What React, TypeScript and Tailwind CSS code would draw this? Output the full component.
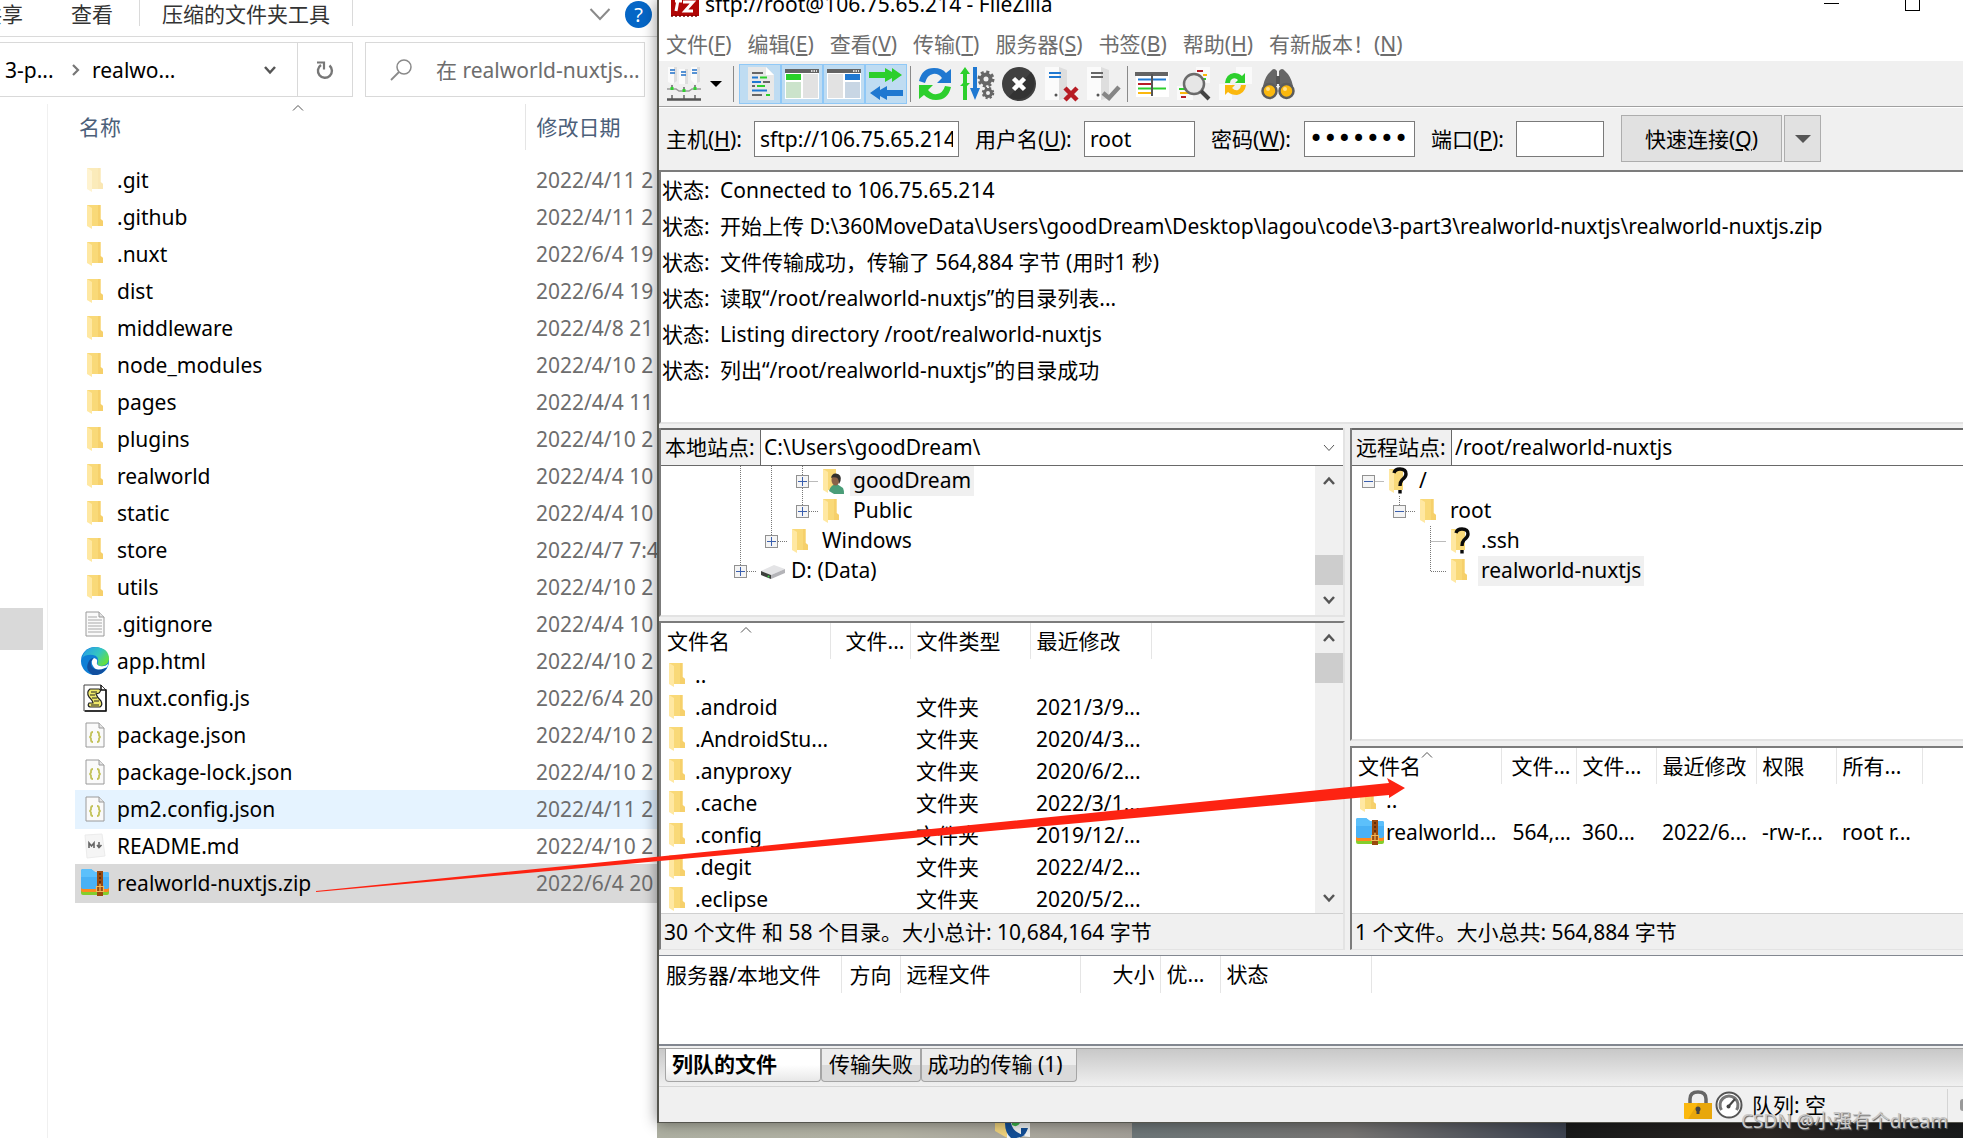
import React from 'react'

type FileRow = { name: string, date: string, icon: React.ReactNode, state?: 'hover' | 'selected' }

const Folder = ({ faded }: { faded?: boolean }) => (
  <svg className={faded ? 'opacity-50' : ''} width="18" height="24" viewBox="0 0 18 24">
    <path d="M1 0H14.500V14L17 16V21H6L1 20Z" fill="#f9d978" />
    <path d="M12 0H14.500V14L17 16V21H12Z" fill="#f6d06b" />
    <path d="M1 0L6 3V24L1 21Z" fill="#ffe8a2" />
  </svg>
)

const Page = ({ children }: { children?: React.ReactNode }) => (
  <svg width="20" height="26" viewBox="0 0 20 26">
    <path d="M1 1H14L19 6V25H1Z" fill="#fafafa" stroke="#9a9a9a" />
    <path d="M14 1V6H19" fill="#e3e3e3" stroke="#9a9a9a" />
    {children}
  </svg>
)

const TextFile = () => (
  <Page>
    <path d="M3 6H12M3 9H17M3 12H17M3 15H17M3 18H17M3 21H17" stroke="#a8a8a8" />
  </Page>
)

const JsonFile = () => (
  <Page>
    <path d="M8 10Q6 10 6 12V13.500L5 15L6 16.500V18Q6 20 8 20M12 10Q14 10 14 12V13.500L15 15L14 16.500V18Q14 20 12 20" fill="none" stroke="#c3c25a" strokeWidth="1.800" />
  </Page>
)

const ScriptFile = () => (
  <svg width="24" height="28" viewBox="0 0 24 28">
    <path d="M1 1H18L23 6V27H1Z" fill="#fff" stroke="#444" />
    <path d="M18 1V6H23V27H2" fill="none" stroke="#111" strokeWidth="1.500" />
    <path d="M7 5H16Q19 6 16 9L13 10Q14 13 18 17Q20 21 17 23H7Q4 22 6 19H10Q10 17 6 13Q3 8 7 5Z" fill="#f0e96a" stroke="#222" strokeWidth="1.200" />
    <path d="M8 8H14M7 11H12M9 14H14M11 17H16M8 21H16" stroke="#222" strokeWidth="1" />
  </svg>
)

const EdgeFile = () => (
  <svg width="28" height="28" viewBox="0 0 28 28">
    <defs>
      <linearGradient id="edgeTop" x1="0" y1="0" x2="1" y2="0.600">
        <stop offset="0.200" stopColor="#2aa7df" />
        <stop offset="0.600" stopColor="#35c6c0" />
        <stop offset="1" stopColor="#63e040" />
      </linearGradient>
    </defs>
    <circle cx="14" cy="14" r="14" fill="#0f7fd6" />
    <path d="M1 11Q4 0 15 0Q28 1 28 12Q27 19 20 19Q15 18 17 15Q18 9 12 8Q5 7 1 11Z" fill="url(#edgeTop)" />
    <path d="M13 11Q8 15 11 20Q15 25 24 21Q27 20 25 22Q20 29 12 28Q4 24 7 16Q9 11 13 11Z" fill="#114f9f" />
    <path d="M13 11Q17 12 16 15Q15 18 19 19Q24 20 27 17Q27 20 24 21Q15 25 12 19Q9 14 13 11Z" fill="#fff" />
  </svg>
)

const MarkdownFile = () => (
  <svg width="24" height="26" viewBox="0 0 24 26">
    <path d="M2 2L19 1L22 23L4 25Z" fill="#f5f5f5" stroke="#ececec" />
    <path d="M6 15V10L8.500 13L11 10V15M16 9V14M14 12L16 14.500L18.500 12" fill="none" stroke="#666" strokeWidth="1.600" />
  </svg>
)

const ZipFile = () => (
  <svg width="28" height="28" viewBox="0 0 28 28">
    <path d="M0 14H28V24Q28 26 26 26H2Q0 26 0 24Z" fill="#84ce2c" />
    <path d="M0 14H28V21Q28 23 26 23H2Q0 23 0 21Z" fill="#ff8a1e" />
    <path d="M0 2Q0 0 2 0H10L14 3H26Q28 3 28 5V18Q28 20 26 20H2Q0 20 0 18Z" fill="#49b1f5" />
    <path d="M0 2Q0 0 2 0H10L14 3H26Q28 3 28 5V8H0Z" fill="#5cc0fb" />
    <path d="M16 2H22V27H16Z" fill="#9a4a0e" />
    <path d="M19 4V16" stroke="#4d2508" strokeWidth="1.500" strokeDasharray="2 2" />
    <path d="M15.500 17.500H22.500V22.500H15.500ZM19 15V22" fill="none" stroke="#f2b95a" strokeWidth="1.200" />
  </svg>
)

const Disk = () => (
  <svg width="26" height="18" viewBox="0 0 26 18">
    <path d="M1 9L14 3L25 7L11 13Z" fill="#e4e4e6" />
    <path d="M1 9L11 13V17L1 13Z" fill="#3d403d" />
    <path d="M11 13L25 7V11L11 17Z" fill="#b4b4b8" />
    <circle cx="8.500" cy="14.500" r="1" fill="#3ed04a" />
  </svg>
)

const UserFolder = () => (
  <svg width="24" height="25" viewBox="0 0 24 25">
    <path d="M1 0H14V21H6L1 20Z" fill="#f9d978" />
    <path d="M1 0L6 3V24L1 21Z" fill="#ffe8a2" />
    <path d="M7 22Q9 15 15 15L21 19Q22 21 22 25H12Z" fill="#4a9d78" />
    <ellipse cx="13.500" cy="11" rx="4" ry="5.500" fill="#8a6248" />
    <path d="M9 9Q10 4 14 4.500Q20 5 18.500 12L17 15Q17 9 14 8.500Q10 8 9 9Z" fill="#33312f" />
  </svg>
)

const UnknownFolder = () => (
  <svg width="22" height="28" viewBox="0 0 22 28">
    <path d="M1 2H15V23H6L1 22Z" fill="#f9d978" />
    <path d="M1 2L6 5V26L1 23Z" fill="#ffe8a2" />
    <path d="M6 6Q7 2 12 2Q18 2 18 7Q18 10 14 13Q12 15 12 19M12 23V26.500" fill="none" stroke="#0a0a0a" strokeWidth="3.400" />
  </svg>
)

const Caret = ({ dir, className }: { dir: 'up' | 'down', className?: string }) => (
  <svg className={className} width="14" height="10" viewBox="0 0 14 10">
    <path d={dir === 'up' ? 'M2 8L7 2.500L12 8' : 'M2 2L7 7.500L12 2'} fill="none" stroke="#555" strokeWidth="2.500" />
  </svg>
)

const SortMark = () => (
  <svg className="absolute top-0 h-[8px] w-[12px]" viewBox="0 0 12 8">
    <path d="M1 6.500L6 1.500L11 6.500" fill="none" stroke="#555" />
  </svg>
)

const files: FileRow[] = [
  { name: '.git', date: '2022/4/11 2', icon: <Folder faded /> },
  { name: '.github', date: '2022/4/11 2', icon: <Folder /> },
  { name: '.nuxt', date: '2022/6/4 19', icon: <Folder /> },
  { name: 'dist', date: '2022/6/4 19', icon: <Folder /> },
  { name: 'middleware', date: '2022/4/8 21', icon: <Folder /> },
  { name: 'node_modules', date: '2022/4/10 2', icon: <Folder /> },
  { name: 'pages', date: '2022/4/4 11', icon: <Folder /> },
  { name: 'plugins', date: '2022/4/10 2', icon: <Folder /> },
  { name: 'realworld', date: '2022/4/4 10', icon: <Folder /> },
  { name: 'static', date: '2022/4/4 10', icon: <Folder /> },
  { name: 'store', date: '2022/4/7 7:4', icon: <Folder /> },
  { name: 'utils', date: '2022/4/10 2', icon: <Folder /> },
  { name: '.gitignore', date: '2022/4/4 10', icon: <TextFile /> },
  { name: 'app.html', date: '2022/4/10 2', icon: <EdgeFile /> },
  { name: 'nuxt.config.js', date: '2022/6/4 20', icon: <ScriptFile /> },
  { name: 'package.json', date: '2022/4/10 2', icon: <JsonFile /> },
  { name: 'package-lock.json', date: '2022/4/10 2', icon: <JsonFile /> },
  { name: 'pm2.config.json', date: '2022/4/11 2', icon: <JsonFile />, state: 'hover' },
  { name: 'README.md', date: '2022/4/10 2', icon: <MarkdownFile /> },
  { name: 'realworld-nuxtjs.zip', date: '2022/6/4 20', icon: <ZipFile />, state: 'selected' },
]

const rowState = {
  none: '',
  hover: 'bg-[#e5f3ff] outline outline-[#e5f3ff]',
  selected: 'bg-[#d9d9d9] outline outline-[#d9d9d9]',
}

const Explorer = () => (
  <section className="flex w-[657px] shrink-0 flex-col overflow-hidden bg-white">
    <nav className="flex h-[37px] items-start border-b border-[#dadada] text-[#333]">
      <button className="-ml-[19px] h-[28px] w-[42px]">共享</button>
      <button className="ml-12 h-[28px]">查看</button>
      <span className="ml-[26px] h-[26px] w-px bg-[#dadada]" />
      <button className="ml-[22px] h-[28px]">压缩的文件夹工具</button>
      <span className="ml-[22px] h-[26px] w-px bg-[#dadada]" />
      <button className="ml-auto h-[28px]" aria-label="展开功能区">
        <svg width="22" height="14" viewBox="0 0 22 14"><path d="M1.500 2L11 12L20.500 2" fill="none" stroke="#8a8a8a" strokeWidth="2" /></svg>
      </button>
      <button className="mr-[5px] ml-[14px] mt-px size-[27px] rounded-full bg-[#0566c6] text-[20px] leading-[27px] text-white">?</button>
    </nav>

    <div className="flex h-[67px] gap-3 pt-[5px] pr-3">
      <div className="flex h-[55px] w-[353px] items-center border border-l-0 border-[#d9d9d9]">
        <span className="w-[72px] pl-[5px]">3-p...</span>
        <svg width="8" height="12" viewBox="0 0 8 12"><path d="M1 1L6 6L1 11" fill="none" stroke="#777" strokeWidth="2.200" /></svg>
        <span className="pl-3">realwo...</span>
        <Caret dir="down" className="mr-5 ml-auto" />
        <button className="flex h-full w-[55px] items-center justify-center border-l border-[#d9d9d9]" aria-label="刷新">
          <svg width="18" height="20" viewBox="0 0 18 20">
            <path d="M13.500 5.500A7 7 0 1 1 5 5" fill="none" stroke="#777" strokeWidth="2.400" />
            <path d="M1 2.500H8V9.500" fill="none" stroke="#777" strokeWidth="2.200" />
          </svg>
        </button>
      </div>
      <label className="flex h-[55px] flex-1 items-center border border-[#d9d9d9] pl-6">
        <svg className="shrink-0" width="22" height="22" viewBox="0 0 22 22">
          <circle cx="14" cy="8" r="7" fill="none" stroke="#8a8a8a" strokeWidth="1.500" />
          <path d="M9 13L1 21" stroke="#8a8a8a" strokeWidth="1.800" />
        </svg>
        <input className="ml-6 w-full min-w-0 text-[#6d6d6d] outline-none placeholder:text-[#6d6d6d]" aria-label="搜索" placeholder="在 realworld-nuxtjs..." />
      </label>
    </div>

    <div className="flex flex-1">
      <aside className="w-[48px] border-r border-[#f0f0f0] pt-[504px]">
        <div className="h-[42px] w-[43px] bg-[#d9d9d9]" />
      </aside>
      <div className="min-w-0 flex-1 pl-[28px]">
        <table className="w-full table-fixed border-collapse">
          <colgroup>
            <col className="w-[449px]" />
            <col />
          </colgroup>
          <thead className="text-[#4c607a]">
            <tr className="h-[46px]">
              <th className="relative border-r border-[#e5e5e5] pl-[3px] text-left font-normal">
                名称
                <span className="absolute top-0 left-[216px]"><SortMark /></span>
              </th>
              <th className="pl-[11px] text-left font-normal whitespace-nowrap">修改日期</th>
            </tr>
          </thead>
          <tbody>
            <tr className="h-3"><td colSpan={2} /></tr>
            {files.map((file) => (
              <tr key={file.name} className={rowState[file.state ?? 'none']}>
                <td className="p-0">
                  <div className="flex h-[37px] items-center pb-[2px]">
                    <span className="flex w-[41px] justify-center pr-[3px]">{file.icon}</span>
                    <span>{file.name}</span>
                  </div>
                </td>
                <td className="pt-0 pr-0 pb-[2px] pl-[11px] whitespace-nowrap text-[#6d6d6d]">{file.date}</td>
              </tr>
            ))}
          </tbody>
        </table>
      </div>
    </div>
  </section>
)

const menus = [
  ['文件', 'F'], ['编辑', 'E'], ['查看', 'V'], ['传输', 'T'],
  ['服务器', 'S'], ['书签', 'B'], ['帮助', 'H'], ['有新版本！', 'N'],
]

const Key = ({ k }: { k: string }) => <>(<span className="underline underline-offset-2">{k}</span>)</>

const Tool = ({ label, active, children }: { label: string, active?: boolean, children: React.ReactNode }) => (
  <button
    aria-label={label}
    className={active
      ? 'flex h-[40px] w-[42px] items-center justify-center border border-[#90c8f6] bg-[#bfdcf2]'
      : 'flex h-[40px] w-[42px] items-center justify-center'}
  >
    <svg width="36" height="36" viewBox="0 0 36 36">{children}</svg>
  </button>
)

const Toolbar = () => (
  <div className="flex h-[46px] items-center border-b border-[#a0a0a0] pl-[4px]">
    <Tool label="站点管理器">
      <path d="M2 1H11V14L6.500 18L2 16ZM13 3H22V18H13ZM25 1H34V16L29 18L25 14Z" fill="#fbfbfb" />
      <path d="M8 1H11V15L8 17ZM19 3H22V18H19ZM31 1H34V16L31 17Z" fill="#dedede" />
      <path d="M4 4H9M4 7H9M15 6H20M15 9H20M26 4H31M26 7H31" stroke="#2070c8" strokeWidth="1.500" />
      <path d="M6 19V24M18 21V26M29 19V24M6 29V33M18 29V33M29 29V33" stroke="#888" strokeWidth="2" />
      <path d="M1 23H10L13 25H23L26 23H35" fill="none" stroke="#999" strokeWidth="1.500" />
      <path d="M1 33.500H35" fill="none" stroke="#555" strokeWidth="2.500" />
      <path d="M6 21V24M18 23V26M29 21V24" stroke="#30d030" strokeWidth="3" />
    </Tool>
    <button className="w-6 pl-[5px]" aria-label="站点列表">
      <svg width="12" height="8" viewBox="0 0 12 8"><path d="M0 1H12L6 7Z" fill="#000" /></svg>
    </button>
    <span className="mr-[5px] ml-[4px] h-9 w-px bg-[#8a8a8a]" />
    <Tool label="消息日志" active>
      <path d="M6 1H24L32 9V34H6Z" fill="#e8e8e8" />
      <path d="M24 1V9H32Z" fill="#fff" />
      <path d="M10 7H21M21 16H28M10 20H13M10 29H20" stroke="#666" strokeWidth="2.200" />
      <path d="M10 11.500H16M10 16H19M10 24.500H25" stroke="#1f78d1" strokeWidth="2.200" />
      <path d="M18 11.500H25M15 20H23M24 29H28" stroke="#2ccf2c" strokeWidth="2.200" />
    </Tool>
    <Tool label="本地目录树" active>
      <path d="M1 3H35V33H1Z" fill="#fff" />
      <path d="M1 3H35V7H1Z" fill="#636363" />
      <path d="M27 5H33" stroke="#fff" strokeWidth="1.500" strokeDasharray="1.500 1" />
      <path d="M2 8H17V14H2Z" fill="#28d028" />
      <path d="M2 16H17V32H2Z" fill="#cbe3cb" />
      <path d="M19 8H34V32H19Z" fill="#e2e2e2" />
    </Tool>
    <Tool label="远程目录树" active>
      <path d="M1 3H35V33H1Z" fill="#fff" />
      <path d="M1 3H35V7H1Z" fill="#636363" />
      <path d="M27 5H33" stroke="#fff" strokeWidth="1.500" strokeDasharray="1.500 1" />
      <path d="M2 8H17V32H2Z" fill="#e2e2e2" />
      <path d="M19 8H34V14H19Z" fill="#1f78d1" />
      <path d="M19 16H34V32H19Z" fill="#c8d6e4" />
    </Tool>
    <Tool label="传输队列" active>
      <path d="M1 6H17V2L24 6V2L34 9L24 16V12L17 16V12H1Z" fill="#2ccf2c" />
      <path d="M35 24H19V20L12 24V20L2 27L12 34V30L19 34V30H35Z" fill="#1f78d1" />
    </Tool>
    <span className="mx-[3px] h-9 w-px bg-[#8a8a8a]" />
    <Tool label="刷新">
      <path d="M2 15Q5 2 17 2Q25 2 29 7L34 3V17H20L25 12Q21 7 16 8Q10 9 8 17Z" fill="#1f78d1" />
      <path d="M34 21Q31 34 19 34Q12 34 7 29L2 33V19H16L11 24Q15 29 20 28Q26 27 28 20Z" fill="#2ccf2c" />
    </Tool>
    <Tool label="处理队列">
      <path d="M1 8L6 1L11 8H8V17H11L8 20V34H4V20H1L4 17V8Z" fill="#2ccf2c" />
      <path d="M14 1H18V22H21L16 34L11 22H14Z" fill="#1f78d1" />
      <circle cx="27" cy="13" r="4.500" fill="none" stroke="#666" strokeWidth="4" />
      <circle cx="27" cy="13" r="7" fill="none" stroke="#666" strokeWidth="3" strokeDasharray="3 2.500" />
      <circle cx="29" cy="27" r="3.500" fill="none" stroke="#666" strokeWidth="3" />
      <circle cx="29" cy="27" r="5" fill="none" stroke="#666" strokeWidth="2.500" strokeDasharray="2 2" />
    </Tool>
    <Tool label="取消">
      <circle cx="18" cy="18" r="17" fill="#404040" />
      <path d="M30 6A17 17 0 0 1 8 31Z" fill="#333" />
      <path d="M12.500 12.500L23.500 23.500M23.500 12.500L12.500 23.500" stroke="#fff" strokeWidth="4.500" />
    </Tool>
    <Tool label="断开连接">
      <path d="M2 1H16V34H2Z" fill="#fbfbfb" />
      <path d="M16 1L24 4V32L16 34Z" fill="#dedede" />
      <path d="M6 7H18M6 11H18" stroke="#1f78d1" strokeWidth="2" />
      <circle cx="13" cy="29" r="1.500" fill="#555" />
      <path d="M22 22L34 34M34 22L22 34" stroke="#b71c24" strokeWidth="4.500" />
    </Tool>
    <Tool label="重新连接">
      <path d="M2 1H16V34H2Z" fill="#fbfbfb" />
      <path d="M16 1L24 4V32L16 34Z" fill="#dedede" />
      <path d="M6 7H18M6 11H18" stroke="#666" strokeWidth="2" />
      <circle cx="13" cy="29" r="1.500" fill="#555" />
      <path d="M18 27L24 32L34 21" fill="none" stroke="#858585" strokeWidth="4.500" />
    </Tool>
    <span className="mx-[3px] h-9 w-px bg-[#8a8a8a]" />
    <Tool label="目录列表过滤">
      <path d="M2 6H35V31H2Z" fill="#fff" />
      <path d="M1 6H34V10H1Z" fill="#636363" />
      <path d="M4 13.500H32" stroke="#1f78d1" strokeWidth="2" />
      <path d="M4 18H17" stroke="#b71c24" strokeWidth="2" />
      <path d="M4 22.500H32" stroke="#2ccf2c" strokeWidth="2" />
      <path d="M4 27H17" stroke="#fbb80e" strokeWidth="2" />
      <path d="M18 8V30" stroke="#555" strokeWidth="2" />
    </Tool>
    <Tool label="目录对比">
      <path d="M20 1H34V17H20ZM1 20H17V34H1Z" fill="#fafafa" />
      <path d="M21 5H27M5 31H10" stroke="#b71c24" strokeWidth="2" />
      <path d="M27 9H31M4 27H14" stroke="#fbb80e" strokeWidth="2" />
      <path d="M3 23H12M27 13H30" stroke="#2ccf2c" strokeWidth="2" />
      <circle cx="18" cy="18" r="10" fill="#e6e6e6" stroke="#6b6b6b" strokeWidth="2.500" />
      <path d="M25 25L33 33" stroke="#444" strokeWidth="4" />
    </Tool>
    <Tool label="同步浏览">
      <path d="M18 1H34V18H18ZM1 18H14V34H1Z" fill="#fafafa" />
      <path d="M7 17Q8 8 16 7Q21 7 24 10L27 7V17H17L20 14Q17 11 14 13Q12 14 12 17Z" fill="#2ccf2c" />
      <path d="M28 19Q27 27 19 29Q13 29 10 26L7 29V19H17L14 22Q17 25 20 24Q23 22 23 19Z" fill="#fbb80e" />
    </Tool>
    <Tool label="搜索文件">
      <path d="M11 5Q14 1 17 5V20H3Q5 10 11 5ZM25 5Q22 1 19 5V20H33Q31 10 25 5Z" fill="#666" />
      <path d="M16 10H20V18H16Z" fill="#555" />
      <circle cx="9.500" cy="25" r="7" fill="#fbb80e" stroke="#5c5c5c" strokeWidth="2.500" />
      <circle cx="26.500" cy="25" r="7" fill="#fbb80e" stroke="#5c5c5c" strokeWidth="2.500" />
      <circle cx="8" cy="23" r="2" fill="#ffe08a" />
      <circle cx="25" cy="23" r="2" fill="#ffe08a" />
    </Tool>
  </div>
)

const field = 'h-[36px] border border-[#7a7a7a] bg-white outline-none'

const QuickConnect = () => (
  <form className="flex h-[63px] items-center border-t border-white pb-px pl-[7px]" onSubmit={(e) => e.preventDefault()}>
    <label className="w-[88px]" htmlFor="host">主机<Key k="H" />:</label>
    <input id="host" className={`${field} w-[205px] px-[5px]`} defaultValue="sftp://106.75.65.214" />
    <label className="ml-4 w-[109px]" htmlFor="user">用户名<Key k="U" />:</label>
    <input id="user" className={`${field} w-[111px] px-[5px]`} defaultValue="root" />
    <label className="ml-4 w-[93px]" htmlFor="pass">密码<Key k="W" />:</label>
    <input id="pass" type="password" className={`${field} w-[111px] px-[4px] font-['DejaVu_Sans',sans-serif] text-[24px]`} defaultValue="1234567" />
    <label className="ml-4 w-[85px]" htmlFor="port">端口<Key k="P" />:</label>
    <input id="port" className={`${field} w-[88px] px-[5px]`} />
    <button className="ml-[17px] h-[47px] w-[161px] border border-[#adadad] bg-[#e1e1e1]">快速连接<Key k="Q" /></button>
    <button className="ml-[2px] flex h-[47px] w-[37px] items-center justify-center border border-[#adadad] bg-[#e1e1e1]" type="button" aria-label="历史记录">
      <svg width="16" height="10" viewBox="0 0 16 10"><path d="M0 1H16L8 9Z" fill="#555" /></svg>
    </button>
  </form>
)

const log = [
  'Connected to 106.75.65.214',
  '开始上传 D:\\360MoveData\\Users\\goodDream\\Desktop\\lagou\\code\\3-part3\\realworld-nuxtjs\\realworld-nuxtjs.zip',
  '文件传输成功，传输了 564,884 字节 (用时1 秒)',
  '读取“/root/realworld-nuxtjs”的目录列表...',
  'Listing directory /root/realworld-nuxtjs',
  '列出“/root/realworld-nuxtjs”的目录成功',
]

const joints: Record<string, string> = {
  blank: '',
  guide: 'M15.500 0V30',
  cross: 'M15.500 0V30M15.500 15.500H31',
  last: 'M15.500 0V15.500H31',
  top: 'M15.500 15.500H31',
}

const Joint = ({ kind, box }: { kind: string, box?: 'plus' | 'minus' }) => (
  <svg className="shrink-0" width="31" height="30" viewBox="0 0 31 30">
    <path d={joints[kind]} fill="none" stroke="#777" strokeDasharray="1 1" />
    {box && <rect x="9.500" y="9.500" width="12" height="12" fill="#f4f4f4" stroke="#919191" />}
    {box && <path d={box === 'plus' ? 'M11 15.500H20M15.500 11V20' : 'M11 15.500H20'} stroke="#3a5fae" />}
  </svg>
)

const TreeRow = ({ lines, box, icon, name, selected }: { lines: string[], box?: 'plus' | 'minus', icon: React.ReactNode, name: string, selected?: boolean }) => (
  <li className="flex h-[30px] items-center">
    {lines.map((kind, i) => <Joint key={i} kind={kind} box={i === lines.length - 1 ? box : undefined} />)}
    <span className="flex w-8 shrink-0 pl-1">{icon}</span>
    <span className={selected ? 'h-[30px] bg-[#f0f0f0] px-[3px]' : 'h-[30px] px-[3px]'}>{name}</span>
  </li>
)

const ScrollBar = ({ end }: { end?: boolean }) => (
  <div className="flex w-7 shrink-0 flex-col bg-[#f0f0f0]">
    <span className="flex h-[30px] items-center justify-center"><Caret dir="up" /></span>
    {end && <span className="flex-1" />}
    <span className="h-[30px] bg-[#cdcdcd]" />
    {!end && <span className="flex-1" />}
    <span className="flex h-[30px] items-center justify-center"><Caret dir="down" /></span>
  </div>
)

const SiteBar = ({ id, label, path, arrow }: { id: string, label: string, path: string, arrow?: boolean }) => (
  <div className="flex h-[38px] border-t-2 border-b border-[#696969] bg-white">
    <label htmlFor={id} className="flex w-[100px] shrink-0 items-center border-r border-[#696969] bg-[#f0f0f0] pb-px pl-[4px] whitespace-nowrap">{label}</label>
    <div className="flex flex-1 items-center">
      <select id={id} className="h-full flex-1 appearance-none pb-px pl-[3px] outline-none"><option>{path}</option></select>
      {arrow && <svg className="mr-2" width="12" height="8" viewBox="0 0 12 8"><path d="M1 1L6 6.500L11 1" fill="none" stroke="#555" /></svg>}
    </div>
  </div>
)

const th = 'relative border-r border-[#e5e5e5] pt-0 pr-[5px] pb-px pl-[6px] text-left font-normal'
const thRight = 'border-r border-[#e5e5e5] pt-0 pr-[5px] pb-px text-right font-normal'
const td = 'py-0 pr-[5px] pl-[6px]'

const localRows = [
  ['..', '', ''],
  ['.android', '文件夹', '2021/3/9...'],
  ['.AndroidStu...', '文件夹', '2020/4/3...'],
  ['.anyproxy', '文件夹', '2020/6/2...'],
  ['.cache', '文件夹', '2022/3/1...'],
  ['.config', '文件夹', '2019/12/...'],
  ['.degit', '文件夹', '2022/4/2...'],
  ['.eclipse', '文件夹', '2020/5/2...'],
]

const LocalPane = () => (
  <div className="flex w-[686px] shrink-0 flex-col">
    <div className="border-r-2 border-b-2 border-l-2 border-[#e3e3e3] border-l-[#7c7c7c] bg-white">
      <SiteBar id="local" label="本地站点:" path="C:\Users\goodDream\" arrow />
      <div className="flex h-[149px]">
        <ul className="flex-1 pl-[64px]">
          <TreeRow lines={['guide', 'guide', 'cross']} box="plus" icon={<UserFolder />} name="goodDream" selected />
          <TreeRow lines={['guide', 'guide', 'last']} box="plus" icon={<Folder />} name="Public" />
          <TreeRow lines={['guide', 'last']} box="plus" icon={<Folder />} name="Windows" />
          <TreeRow lines={['last']} box="plus" icon={<Disk />} name="D: (Data)" />
        </ul>
        <ScrollBar end />
      </div>
    </div>
    <div className="mt-1 border-t-2 border-r-2 border-b border-l-2 border-[#e3e3e3] border-t-[#7c7c7c] border-l-[#7c7c7c] bg-white">
      <div className="flex h-[290px] overflow-hidden">
        <div className="min-w-0 flex-1">
          <table className="w-[490px] table-fixed border-collapse whitespace-nowrap">
            <colgroup>
              <col className="w-[169px]" />
              <col className="w-[80px]" />
              <col className="w-[120px]" />
              <col className="w-[121px]" />
            </colgroup>
            <thead>
              <tr className="h-[36px]">
                <th className={th}>文件名<span className="absolute top-[3px] left-[79px]"><SortMark /></span></th>
                <th className={thRight}>文件...</th>
                <th className={th}>文件类型</th>
                <th className={th}>最近修改</th>
              </tr>
            </thead>
            <tbody>
              {localRows.map(([name, kind, date]) => (
                <tr key={name}>
                  <td className="p-0">
                    <div className="flex h-[32px] items-center">
                      <span className="w-[34px] pl-[7px]"><Folder /></span>{name}
                    </div>
                  </td>
                  <td className={td} />
                  <td className={td}>{kind}</td>
                  <td className={td}>{date}</td>
                </tr>
              ))}
            </tbody>
          </table>
        </div>
        <ScrollBar />
      </div>
      <div className="flex h-[36px] items-center border-t border-[#d0d0d0] bg-[#f0f0f0] pl-[3px]">30 个文件 和 58 个目录。大小总计: 10,684,164 字节</div>
    </div>
  </div>
)

const RemotePane = () => (
  <div className="flex min-w-0 flex-1 flex-col">
    <div className="flex flex-1 flex-col border-b-2 border-l-2 border-[#e3e3e3] border-l-[#7c7c7c] bg-white">
      <SiteBar id="remote" label="远程站点:" path="/root/realworld-nuxtjs" />
      <ul className="pl-px">
        <TreeRow lines={['top']} box="minus" icon={<UnknownFolder />} name="/" />
        <TreeRow lines={['blank', 'last']} box="minus" icon={<Folder />} name="root" />
        <TreeRow lines={['blank', 'blank', 'cross']} icon={<UnknownFolder />} name=".ssh" />
        <TreeRow lines={['blank', 'blank', 'last']} icon={<Folder />} name="realworld-nuxtjs" selected />
      </ul>
    </div>
    <div className="mt-[5px] border-t-2 border-b border-l-2 border-[#e3e3e3] border-t-[#7c7c7c] border-l-[#7c7c7c] bg-white">
      <div className="h-[165px] overflow-hidden">
        <table className="w-[570px] table-fixed border-collapse whitespace-nowrap">
          <colgroup>
            <col className="w-[149px]" />
            <col className="w-[75px]" />
            <col className="w-[80px]" />
            <col className="w-[100px]" />
            <col className="w-[80px]" />
            <col className="w-[86px]" />
          </colgroup>
          <thead>
            <tr className="h-[36px]">
              <th className={th}>文件名<span className="absolute top-[3px] left-[69px]"><SortMark /></span></th>
              <th className={thRight}>文件...</th>
              <th className={th}>文件...</th>
              <th className={th}>最近修改</th>
              <th className={th}>权限</th>
              <th className={th}>所有...</th>
            </tr>
          </thead>
          <tbody>
            <tr>
              <td className="p-0" colSpan={6}>
                <div className="flex h-[32px] items-center"><span className="w-[34px] pl-[7px]"><Folder /></span>..</div>
              </td>
            </tr>
            <tr>
              <td className="p-0">
                <div className="flex h-[32px] items-center"><span className="w-[34px] shrink-0 pl-1"><ZipFile /></span>realworld...</div>
              </td>
              <td className="py-0 pr-[5px] text-right">564,...</td>
              <td className={td}>360...</td>
              <td className={td}>2022/6...</td>
              <td className={td}>-rw-r...</td>
              <td className={td}>root r...</td>
            </tr>
          </tbody>
        </table>
      </div>
      <div className="flex h-[36px] items-center border-t border-[#d0d0d0] bg-[#f0f0f0] pl-[3px]">1 个文件。大小总共: 564,884 字节</div>
    </div>
  </div>
)

const Queue = () => (
  <div className="mt-[5px] h-[91px] border-t border-b-2 border-[#828790] bg-white">
    <table className="w-[712px] table-fixed border-collapse whitespace-nowrap">
      <colgroup>
        <col className="w-[182px]" />
        <col className="w-[59px]" />
        <col className="w-[180px]" />
        <col className="w-[80px]" />
        <col className="w-[60px]" />
        <col className="w-[151px]" />
      </colgroup>
      <thead>
        <tr className="h-[37px]">
          <th className="border-r border-[#e5e5e5] py-0 pl-[7px] text-left font-normal">服务器/本地文件</th>
          <th className="border-r border-[#e5e5e5] p-0 text-center font-normal">方向</th>
          <th className={th}>远程文件</th>
          <th className={thRight}>大小</th>
          <th className={th}>优...</th>
          <th className={th}>状态</th>
        </tr>
      </thead>
    </table>
  </div>
)

const tab = 'h-[33px] rounded-b-sm border border-t-0 border-[#a5a5a5] bg-linear-to-b from-[#ededed] from-50% to-[#dadada] to-50%'

const FileZilla = () => (
  <section className="relative flex flex-col border-b border-l-2 border-[#55554e] bg-[#f0f0f0] shadow-[0_0_14px_rgba(0,0,0,0.45)]">
    <header className="flex h-[27px] items-start bg-white pl-3 leading-[8px]">
      <svg width="28" height="17" viewBox="0 0 28 17">
        <path d="M0 0H28V16H0Z" fill="#b00606" />
        <path d="M0 16H28" stroke="#7c0000" strokeWidth="1.500" strokeDasharray="2 2" />
        <path d="M4 1H11M7 0L5 11M12 2H22L14 11H22" fill="none" stroke="#fff" strokeWidth="3" />
      </svg>
      <h1 className="ml-[6px]">sftp://root@106.75.65.214 - FileZilla</h1>
      <button className="mt-[3px] mr-[66px] ml-auto h-px w-[15px] bg-black" aria-label="最小化" />
      <button className="mr-[43px] h-[11px] w-[15px] border border-t-0 border-black" aria-label="最大化" />
    </header>
    <nav className="flex h-[34px] items-center gap-4 bg-white pl-[7px] text-[#6d6d6d]">
      {menus.map(([label, k]) => <button key={k}>{label}<Key k={k} /></button>)}
    </nav>
    <Toolbar />
    <QuickConnect />
    <ul className="border-t-2 border-b-2 border-l-2 border-[#e3e3e3] border-t-[#7c7c7c] border-l-[#7c7c7c] bg-white pb-[34px]">
      {log.map((line) => (
        <li key={line} className="flex h-[36px] items-center pl-px whitespace-nowrap">
          <span className="w-[58px]">状态:</span>{line}
        </li>
      ))}
    </ul>
    <div className="mt-1 flex gap-[5px]">
      <LocalPane />
      <RemotePane />
    </div>
    <Queue />
    <div className="mt-[2px] flex h-[39px] items-start border-t border-b border-t-[#a0a0a0] border-b-[#d4d4d4] bg-linear-to-b from-[#c8c8c8] to-[#f0f0f0] pl-[6px]">
      <button className="h-[33px] w-[156px] rounded-b-sm border border-t-0 border-[#a5a5a5] bg-linear-to-b from-white from-50% to-[#e8e8e8] pb-[2px] pl-[6px] text-left font-bold">列队的文件</button>
      <button className={`${tab} w-[100px] pb-[2px]`}>传输失败</button>
      <button className={`${tab} w-[156px] pr-2 pb-[2px]`}>成功的传输 (1)</button>
    </div>
    <footer className="flex h-[35px] items-center justify-end">
      <svg width="28" height="30" viewBox="0 0 28 30">
        <path d="M6 14V9Q6 2 14 2Q22 2 22 9V14" fill="none" stroke="#666" strokeWidth="3.500" />
        <path d="M0 13H28V28Q28 29 27 29H1Q0 29 0 28Z" fill="#fbb80e" />
        <path d="M14 13H28V29H4Z" fill="#e8a70c" />
        <path d="M14 18V24" stroke="#444" strokeWidth="3" />
        <circle cx="14" cy="19" r="2.500" fill="#444" />
      </svg>
      <svg className="ml-[3px]" width="28" height="28" viewBox="0 0 28 28">
        <circle cx="14" cy="14" r="12.500" fill="#fff" stroke="#555" strokeWidth="2" />
        <path d="M6.500 19A9 9 0 1 1 21.500 19" fill="none" stroke="#777" strokeWidth="3" />
        <path d="M13 16L20 8" stroke="#444" strokeWidth="2" />
        <circle cx="13.500" cy="15.500" r="2" fill="#444" />
      </svg>
      <span className="ml-[9px] w-[195px]">队列: 空</span>
      <span className="mr-[12px] h-[32px] w-px bg-[#d4d4d4]" />
      <span className="h-[12px] w-[3px] rounded-l-full bg-[#999]" />
    </footer>
  </section>
)

const Wallpaper = () => (
  <div className="flex min-h-[15px] flex-1 bg-[#20211f]">
    <div className="flex w-[475px] bg-linear-to-r from-[#aeb0a2] via-[#b3b2a4] to-[#a39f98] pl-[338px]">
      <svg width="35" height="16" viewBox="0 0 35 16">
        <path d="M0 0H14V16L0 8Z" fill="#efd27c" />
        <path d="M12 0H35V14L25 13V16H12Z" fill="#f0f2f2" />
        <path d="M10 0H16Q18 10 30 12Q24 16 16 15Q10 10 10 0ZM26 5H33Q30 14 26 12Z" fill="#134f96" />
        <path d="M17 0H25Q22 5 17 2Z" fill="#3bb54a" />
      </svg>
    </div>
    <div className="w-[434px] bg-linear-to-r from-[#6d7678] via-[#777573] to-[#3d4350]" />
    <div className="flex-1 bg-linear-to-r from-[#191a1a] via-[#2c2724] to-[#191b1c]" />
  </div>
)

const App = () => {
  return (
    <div className="relative flex min-h-screen w-full overflow-hidden bg-white font-['Noto_Sans','Noto_Sans_CJK_SC',sans-serif] text-[21px] leading-[28px] text-black">
      <Explorer />
      <main className="flex min-w-0 flex-1 flex-col">
        <FileZilla />
        <Wallpaper />
      </main>

      <svg className="pointer-events-none absolute top-[778px] left-[316px]" width="1090" height="115" viewBox="0 0 1090 115">
        <path d="M0 113L1073 5L1071 0L1089 10L1073 20L1073 17L0 114Z" fill="#fd2312" />
      </svg>
      <p className="pointer-events-none absolute right-[15px] bottom-[4px] text-[19px] text-[#c8c8c8] [text-shadow:1px_1px_1px_#666]">CSDN @小强有个dream</p>
    </div>
  )
}

export default App
